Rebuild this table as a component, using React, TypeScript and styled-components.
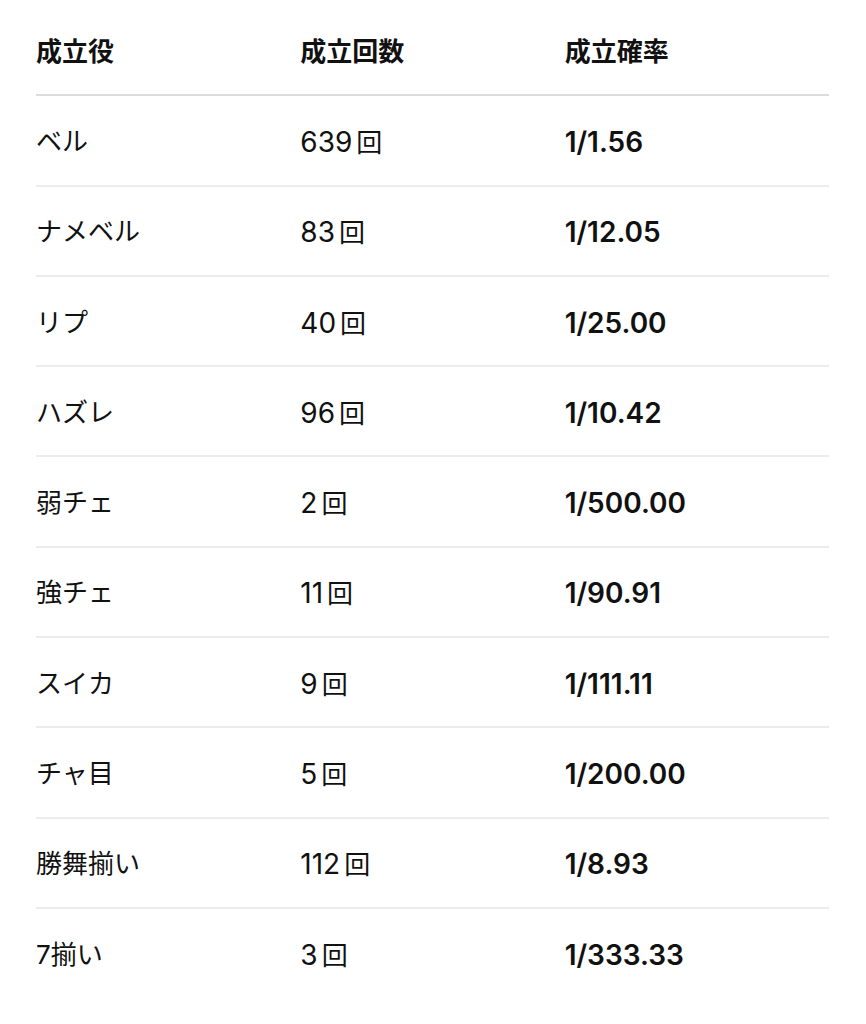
import React from "react";
import styled, { createGlobalStyle } from "styled-components";

const GlobalStyle = createGlobalStyle`
  html, body {
    margin: 0;
    padding: 0;
    background: #ffffff;
  }
  body {
    font-family: Inter, "Noto Sans CJK JP", "Noto Sans", sans-serif;
    color: #111111;
  }
`;

const Page = styled.div`
  padding: 6px 37px 0 36px;
`;

const Table = styled.table`
  width: 100%;
  table-layout: fixed;
  border-collapse: collapse;
  font-size: 26px;
  line-height: 1;
`;

const HeadCell = styled.th`
  height: 85.3px;
  padding: 3px 0 0;
  text-align: left;
  font-weight: 700;
  vertical-align: middle;
  border-bottom: 2px solid #dcdcdc;
`;

const Row = styled.tr`
  &:last-child td {
    border-bottom: none;
  }
`;

const Cell = styled.td<{ $bold?: boolean }>`
  height: 85.3px;
  padding: 3px 0 0;
  vertical-align: middle;
  font-weight: ${(p) => (p.$bold ? 600 : 400)};
  border-bottom: 2px solid #ececec;
  white-space: nowrap;
`;

const Num = styled.span`
  font-size: 28px;
`;

const Unit = styled.span`
  margin-left: 4px;
`;

const rows = [
  { name: "ベル", count: "639", rate: "1/1.56" },
  { name: "ナメベル", count: "83", rate: "1/12.05" },
  { name: "リプ", count: "40", rate: "1/25.00" },
  { name: "ハズレ", count: "96", rate: "1/10.42" },
  { name: "弱チェ", count: "2", rate: "1/500.00" },
  { name: "強チェ", count: "11", rate: "1/90.91" },
  { name: "スイカ", count: "9", rate: "1/111.11" },
  { name: "チャ目", count: "5", rate: "1/200.00" },
  { name: "勝舞揃い", count: "112", rate: "1/8.93" },
  { name: "7揃い", count: "3", rate: "1/333.33" },
];

export default function App() {
  return (
    <>
      <GlobalStyle />
      <Page>
        <Table>
          <thead>
            <tr>
              <HeadCell>成立役</HeadCell>
              <HeadCell>成立回数</HeadCell>
              <HeadCell>成立確率</HeadCell>
            </tr>
          </thead>
          <tbody>
            {rows.map((r) => (
              <Row key={r.name}>
                <Cell>{r.name}</Cell>
                <Cell>
                  <Num>{r.count}</Num>
                  <Unit>回</Unit>
                </Cell>
                <Cell $bold>
                  <Num>{r.rate}</Num>
                </Cell>
              </Row>
            ))}
          </tbody>
        </Table>
      </Page>
    </>
  );
}
